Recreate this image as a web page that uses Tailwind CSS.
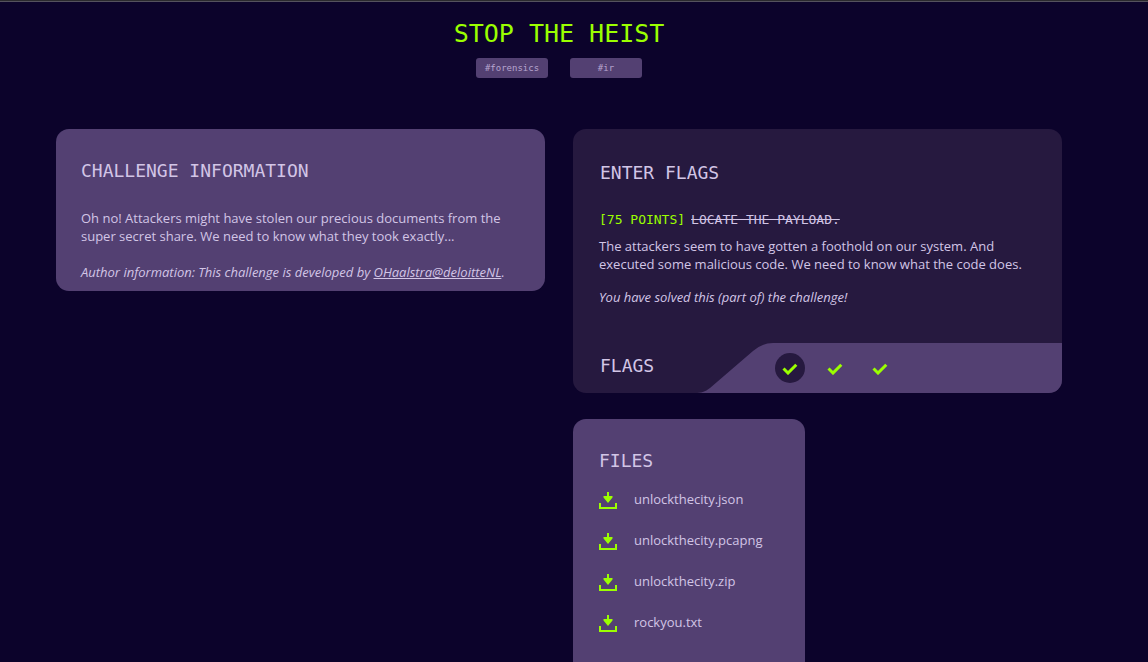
<!DOCTYPE html>
<html lang="en">
<head>
<meta charset="utf-8">
<meta name="viewport" content="width=device-width, initial-scale=1">
<title>Stop the Heist</title>
<script src="https://cdn.jsdelivr.net/npm/@tailwindcss/browser@4"></script>
</head>
<body class="h-screen overflow-hidden border-t border-[#2b2a2e] bg-[#0c032b] font-['Open_Sans',sans-serif] text-[13px] leading-[18px] text-[#d2c5e6]">
<svg class="hidden" aria-hidden="true">
  <symbol id="check" viewBox="0 0 16 12"><path d="M1.500 5.500 6 10 14.300 1.700" fill="none" stroke="#9bff00" stroke-width="3"/></symbol>
  <symbol id="download" viewBox="0 0 18 17"><path d="M8 0h2v4h3.500v1.500L9 11 4.500 5.500V4H8zM0 11h2v4h14v-4h2v6H0z" fill="#9bff00"/></symbol>
</svg>
<div class="border-t border-[#55525e] pr-[30px]">
  <header class="flex flex-col items-center pt-4">
    <h1 class="font-['DejaVu_Sans_Mono',monospace] text-[25px] leading-8 text-[#9bff00]">STOP THE HEIST</h1>
    <ul class="mt-2 flex gap-[22px] font-['DejaVu_Sans_Mono',monospace] text-[9px] leading-5 text-[#b7a5cf]">
      <li class="w-[72px] rounded-[3px] bg-[#534072] text-center">#forensics</li>
      <li class="w-[72px] rounded-[3px] bg-[#534072] text-center">#ir</li>
    </ul>
  </header>
  <main class="mx-auto mt-[51px] grid max-w-[1006px] grid-cols-2 items-start gap-7">
    <section class="rounded-[13px] bg-[#534072] px-[25px] pt-[30px] pb-[10px]">
      <h2 class="font-['DejaVu_Sans_Mono',monospace] text-[18px] leading-6">CHALLENGE INFORMATION</h2>
      <p class="mt-[26px]">Oh no! Attackers might have stolen our precious documents from the super secret share. We need to know what they took exactly...</p>
      <p class="mt-[18px] italic">Author information: This challenge is developed by <a href="#" class="underline">OHaalstra@deloitteNL</a>.</p>
    </section>
    <div class="flex flex-col items-start gap-[26px]">
      <section class="w-full overflow-hidden rounded-[13px] bg-[#26193f]">
        <div class="px-[26px] pt-8">
          <h2 class="pl-px font-['DejaVu_Sans_Mono',monospace] text-[18px] leading-6">ENTER FLAGS</h2>
          <h3 class="mt-[26px] flex gap-[6px] font-['DejaVu_Sans_Mono',monospace] text-[13px] leading-[18px]"><span class="text-[#9bff00]">[75 POINTS]</span><s>LOCATE THE PAYLOAD.</s></h3>
          <p class="mt-2">The attackers seem to have gotten a foothold on our system. And executed some malicious code. We need to know what the code does.</p>
          <p class="mt-[15px] italic">You have solved this (part of) the challenge!</p>
        </div>
        <div class="mt-[37px] flex h-[50px]">
          <h2 class="w-[122px] shrink-0 pt-[11px] pl-[27px] font-['DejaVu_Sans_Mono',monospace] text-[18px] leading-6">FLAGS</h2>
          <svg class="w-[78px] shrink-0" viewBox="0 0 78 50" aria-hidden="true"><path d="M0 50C6 50 10 49 15 45L58 8Q67 0 78 0V50z" fill="#534072"/></svg>
          <div class="flex flex-1 gap-[15px] bg-[#534072] pt-[10px] pl-[2px]">
            <button type="button" aria-label="Flag 1, solved" class="flex size-[30px] items-center justify-center rounded-full bg-[#26193f] pt-[2px]"><svg class="h-3 w-4"><use href="#check"/></svg></button>
            <button type="button" aria-label="Flag 2, solved" class="flex size-[30px] items-center justify-center rounded-full pt-[2px]"><svg class="h-3 w-4"><use href="#check"/></svg></button>
            <button type="button" aria-label="Flag 3, solved" class="flex size-[30px] items-center justify-center rounded-full pt-[2px]"><svg class="h-3 w-4"><use href="#check"/></svg></button>
          </div>
        </div>
      </section>
      <section class="w-[232px] rounded-[13px] bg-[#534072] px-[26px] pt-[30px] pb-16">
        <h2 class="font-['DejaVu_Sans_Mono',monospace] text-[18px] leading-6">FILES</h2>
        <ul class="mt-4 flex flex-col gap-[21px] leading-5">
          <li><a href="#" class="flex items-end gap-[17px]"><svg class="h-[17px] w-[18px]" aria-hidden="true"><use href="#download"/></svg>unlockthecity.json</a></li>
          <li><a href="#" class="flex items-end gap-[17px]"><svg class="h-[17px] w-[18px]" aria-hidden="true"><use href="#download"/></svg>unlockthecity.pcapng</a></li>
          <li><a href="#" class="flex items-end gap-[17px]"><svg class="h-[17px] w-[18px]" aria-hidden="true"><use href="#download"/></svg>unlockthecity.zip</a></li>
          <li><a href="#" class="flex items-end gap-[17px]"><svg class="h-[17px] w-[18px]" aria-hidden="true"><use href="#download"/></svg>rockyou.txt</a></li>
        </ul>
      </section>
    </div>
  </main>
</div>
</body>
</html>
